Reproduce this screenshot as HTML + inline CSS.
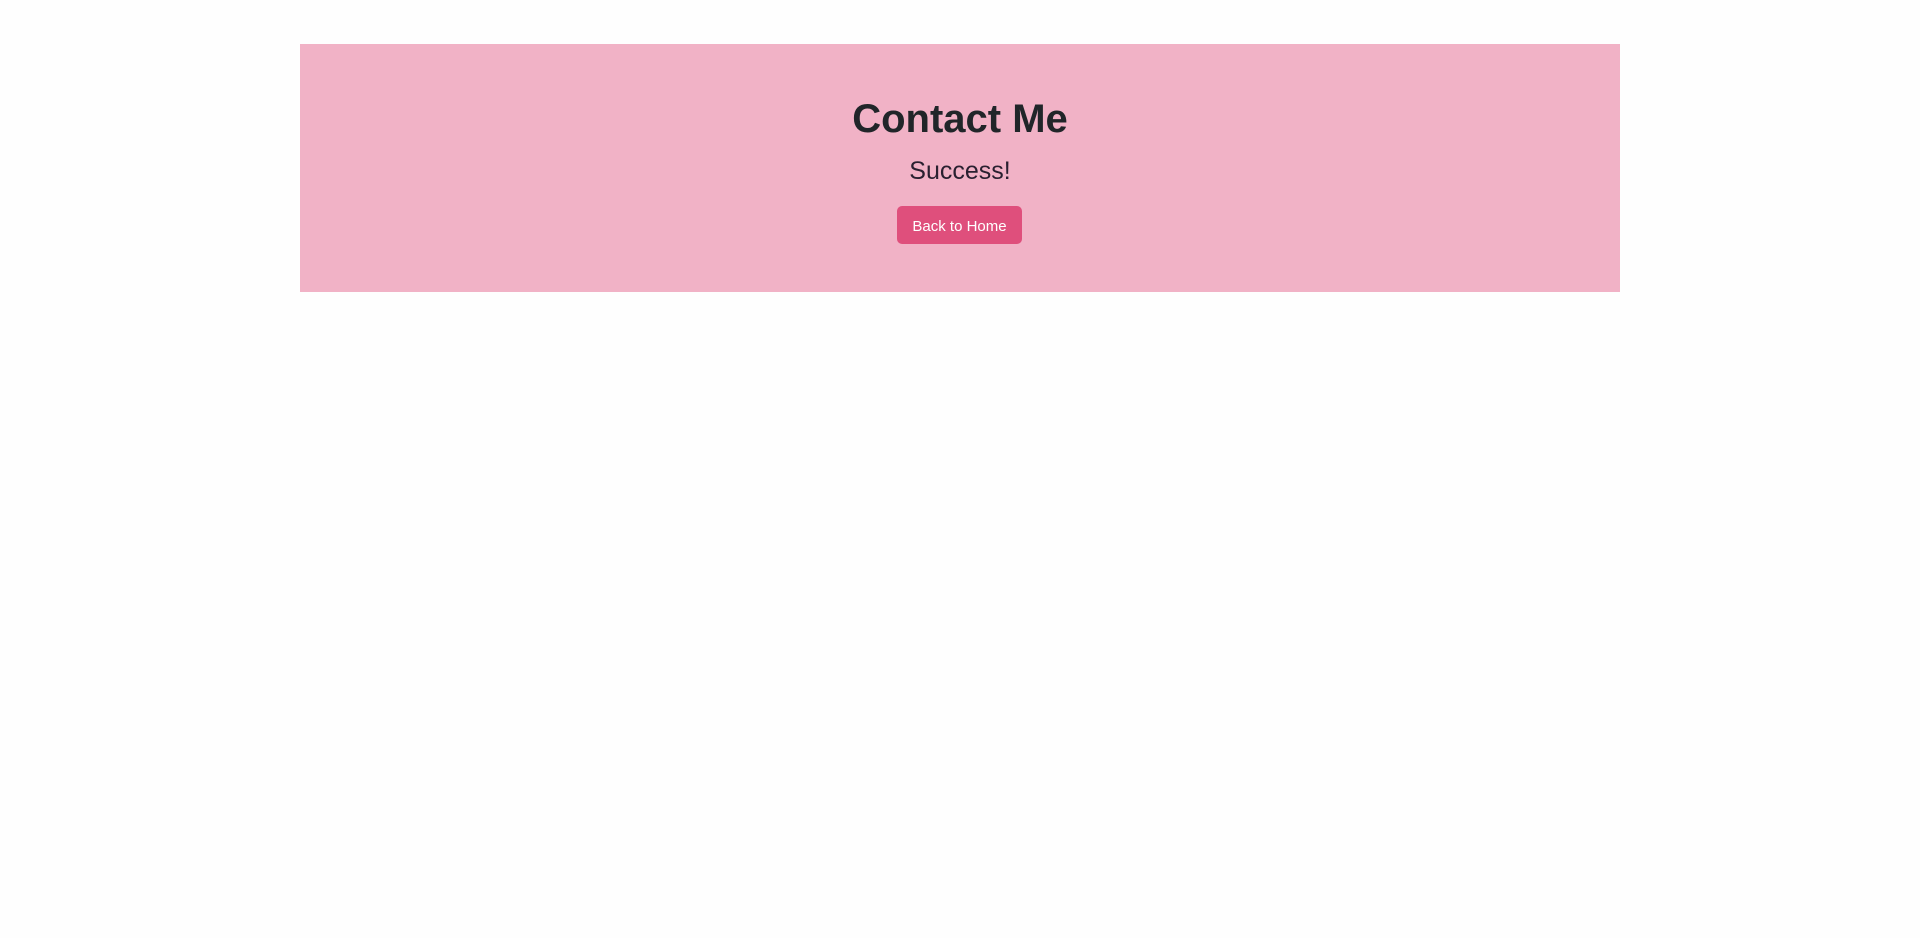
<!DOCTYPE html>
<html><head><style>
body{margin:0;background:#fefefe;font-family:"Liberation Sans",sans-serif;width:1920px;height:938px;overflow:hidden}
.box{position:absolute;left:300px;top:44px;width:1320px;height:248px;background:#f1b2c6;text-align:center;color:#212529}
h1{margin:0;position:absolute;top:51px;width:100%;font-size:40px;line-height:48px;font-weight:bold}
.s{position:absolute;top:112px;width:100%;font-size:25px;line-height:30px;color:#2a2030}
.b{position:absolute;left:597px;top:162px;width:125px;height:38px;background:#df4f7c;border-radius:5px;color:#fff;font-size:15px;line-height:41px}
</style></head><body>
<div class="box">
<h1>Contact Me</h1>
<div class="s">Success!</div>
<div class="b">Back to Home</div>
</div>
</body></html>
